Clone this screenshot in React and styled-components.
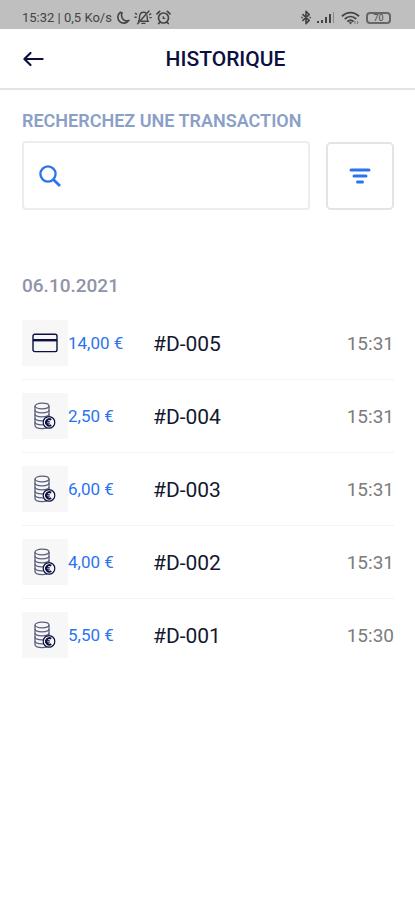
/* eslint-disable react/prop-types */
import { useState } from "react";
import styled, { createGlobalStyle, ThemeProvider } from "styled-components";

const theme = {
  colors: {
    white: "#ffffff",
    dark: "#0b1040",
    reference: "#14172f",
    primary: "#2b74ee",
    label: "#8b9fc8",
    date: "#9094a8",
    time: "#7c7c7c",
    border: "#e4e4e4",
    field: "#ededed",
    separator: "#f3f3f3",
    tile: "#f7f7f7",
    statusBar: "#bfbfbf",
    statusText: "#444444",
  },
  gutter: "22px",
};

const TRANSACTIONS = [
  { id: "#D-005", type: "card", amount: "14,00 €", time: "15:31" },
  { id: "#D-004", type: "cash", amount: "2,50 €", time: "15:31" },
  { id: "#D-003", type: "cash", amount: "6,00 €", time: "15:31" },
  { id: "#D-002", type: "cash", amount: "4,00 €", time: "15:31" },
  { id: "#D-001", type: "cash", amount: "5,50 €", time: "15:30" },
];

function MoonIcon() {
  return (
    <svg width="14" height="14" viewBox="0 0 14 14" fill="none" stroke="currentColor" strokeWidth="1.6" strokeLinejoin="round">
      <path d="M4.2 1.4A6 6 0 1 0 12.9 9.4C9.4 11 4 8 6 1.8Z" />
    </svg>
  );
}

function MutedBellIcon() {
  return (
    <svg width="18" height="15" viewBox="0 0 18 15" fill="none" stroke="currentColor" strokeWidth="1.4" strokeLinecap="round">
      <path d="M4.5 11.2C5.8 9.5 5.2 8 5.6 6 6 3.6 7.5 2.3 9.6 2.3c1.2 0 2 .3 2.7 1M13.1 5.6c.3 2-.2 3.8 1 5.6H7" />
      <path d="M15 1 3.6 13.8M8 13.4h3" />
      <path d="M2.6 4.2 1.4 3.4M2.3 7.2H1M15.6 4.6l1.2-.7M15.8 7.6h1.4" />
    </svg>
  );
}

function AlarmIcon() {
  return (
    <svg width="15" height="15" viewBox="0 0 15 15" fill="none" stroke="currentColor" strokeWidth="1.7" strokeLinecap="round">
      <circle cx="7.5" cy="8" r="5" />
      <path d="M7.2 6.6v1.8h1.6" strokeWidth="1.2" />
      <path d="M1 3.8 3.6 1.4M14 3.8l-2.6-2.4M4 12l-1.2 1.5M11 12l1.2 1.5" />
    </svg>
  );
}

function BluetoothIcon() {
  return (
    <svg width="10" height="15" viewBox="0 0 10 15" fill="none" stroke="currentColor" strokeWidth="1.6" strokeLinejoin="round">
      <path d="m1.4 4.2 6.8 6.2L5 13.6V1.4l3.2 3.2-6.8 6.2" />
      <path d="M.2 7.5h1.5M8.4 7.5h1.5" />
    </svg>
  );
}

function SignalIcon() {
  return (
    <svg width="18" height="13" viewBox="0 0 18 13" fill="currentColor">
      <rect x="0" y="10" width="2" height="2" />
      <rect x="4" y="9" width="2" height="3" />
      <rect x="8" y="6" width="2" height="6" />
      <rect x="12" y="3" width="2" height="9" />
      <rect x="16" y="1" width="1" height="11" opacity="0.45" />
    </svg>
  );
}

function WifiIcon() {
  return (
    <svg width="19" height="14" viewBox="0 0 19 14" fill="none" stroke="currentColor" strokeWidth="1.9">
      <path d="M1 5.2C6 .4 13 .4 18 5.2M3.8 8c3.4-3.2 8-3.2 11.4 0M6.4 10.6c1.8-1.7 4.4-1.7 6.2 0" />
      <path d="m7.6 11.3 1.9 2.3 1.9-2.3Z" fill="currentColor" stroke="none" />
      <path d="M14 10v3M16.6 10v3" strokeWidth="1" opacity="0.6" />
    </svg>
  );
}

function BackIcon() {
  return (
    <svg width="22" height="16" viewBox="0 0 22 16" fill="none" stroke="currentColor" strokeWidth="2.2" strokeLinecap="round" strokeLinejoin="round">
      <path d="M20.6 8H2.4M8.5 2 2.4 8l6.1 6" />
    </svg>
  );
}

function SearchIcon() {
  return (
    <svg width="22" height="22" viewBox="0 0 22 22" fill="none" stroke="currentColor" strokeWidth="2.3">
      <circle cx="9" cy="9" r="7.6" />
      <path d="m14.4 14.4 6.6 6.6" strokeWidth="2.8" />
    </svg>
  );
}

function FilterIcon() {
  return (
    <svg width="22" height="18" viewBox="0 0 22 18" fill="none" stroke="currentColor" strokeWidth="3" strokeLinecap="round">
      <path d="M2 3h18M5 9h12M8.5 15h5" />
    </svg>
  );
}

function CardIcon() {
  return (
    <svg width="26" height="20" viewBox="0 0 26 20" fill="none" stroke="currentColor" strokeWidth="1.4">
      <rect x="1" y="1.2" width="24" height="17.4" rx="1.8" />
      <path d="M1 7.2h24" strokeWidth="2.4" />
    </svg>
  );
}

function CoinsIcon() {
  return (
    <svg width="22" height="28" viewBox="0 0 22 28" fill="none" stroke="currentColor" strokeWidth="1.3">
      <g opacity="0.65">
        <ellipse cx="8" cy="4" rx="7" ry="2.8" />
        <path d="M1 4v19.6c0 1.8 3.2 3 7.2 3 1.8 0 3.4-.2 4.6-.7M15 4v10.6" />
        <path d="M1 8c0 1.6 3.2 2.8 7 2.8s7-1.2 7-2.8" />
        <path d="M1 12c0 1.6 3.2 2.8 7 2.8s7-1.2 7-2.8" />
        <path d="M1 16c0 1.6 3.2 2.8 7 2.8h1.4" />
        <path d="M1 20c0 1.6 3.2 2.8 7 2.8h1.6" />
      </g>
      <circle cx="15" cy="20.4" r="5.8" fill="#f7f7f7" strokeWidth="1.2" />
      <path d="M17.2 17.8a3.2 3.2 0 1 0 0 5.2" strokeWidth="2" />
      <path d="M11.2 19.7h4.6M11.2 21.2h4.6" strokeWidth="1" />
    </svg>
  );
}

function StatusBar() {
  return (
    <StatusBarStyled>
      <div className="group">
        <span>15:32 | 0,5 Ko/s</span>
        <MoonIcon />
        <MutedBellIcon />
        <AlarmIcon />
      </div>
      <div className="group group-right">
        <BluetoothIcon />
        <SignalIcon />
        <WifiIcon />
        <Battery>70</Battery>
      </div>
    </StatusBarStyled>
  );
}

function Transaction({ id, type, amount, time }) {
  return (
    <TransactionStyled>
      <div className="tile">{type === "card" ? <CardIcon /> : <CoinsIcon />}</div>
      <span className="amount">{amount}</span>
      <span className="reference">{id}</span>
      <time className="time">{time}</time>
    </TransactionStyled>
  );
}

export default function App() {
  const [search, setSearch] = useState("");
  const transactions = TRANSACTIONS.filter(({ id }) =>
    id.toLowerCase().includes(search.toLowerCase())
  );

  return (
    <ThemeProvider theme={theme}>
      <GlobalStyle />
      <StatusBar />
      <Header>
        <BackButton type="button" aria-label="Retour">
          <BackIcon />
        </BackButton>
        <h1>HISTORIQUE</h1>
      </Header>
      <Main>
        <SearchLabel htmlFor="search">RECHERCHEZ UNE TRANSACTION</SearchLabel>
        <SearchRow>
          <SearchField>
            <SearchIcon />
            <input
              id="search"
              type="text"
              value={search}
              onChange={(e) => setSearch(e.target.value)}
            />
          </SearchField>
          <FilterButton type="button" aria-label="Filtrer">
            <FilterIcon />
          </FilterButton>
        </SearchRow>
        <DateTitle>06.10.2021</DateTitle>
        <TransactionList>
          {transactions.map((transaction) => (
            <Transaction key={transaction.id} {...transaction} />
          ))}
        </TransactionList>
      </Main>
    </ThemeProvider>
  );
}

const GlobalStyle = createGlobalStyle`
  * {
    box-sizing: border-box;
  }

  body {
    margin: 0;
    background: ${theme.colors.white};
    color: ${theme.colors.dark};
    font-family: Roboto, "Liberation Sans", sans-serif;
  }

  svg {
    display: block;
    flex-shrink: 0;
  }
`;

const StatusBarStyled = styled.div`
  display: flex;
  justify-content: space-between;
  align-items: center;
  height: 29px;
  padding: 6px 24px 0 22px;
  background: ${({ theme }) => theme.colors.statusBar};
  color: ${({ theme }) => theme.colors.statusText};
  font-size: 13px;
  line-height: 16px;

  .group {
    display: flex;
    align-items: center;
    gap: 4px;
  }

  .group-right {
    gap: 6px;
  }
`;

const Battery = styled.span`
  width: 25px;
  height: 12px;
  border: 2px solid #666666;
  border-radius: 4px;
  font-size: 9px;
  line-height: 8px;
  text-align: center;
`;

const Header = styled.header`
  display: grid;
  grid-template-columns: 24px 1fr 24px;
  align-items: center;
  height: 61px;
  padding: 0 ${({ theme }) => theme.gutter};
  border-bottom: 2px solid ${({ theme }) => theme.colors.border};

  h1 {
    margin: 0;
    padding-left: 36px;
    font-size: 21px;
    font-weight: 500;
    line-height: 24px;
    text-align: center;
  }
`;

const BackButton = styled.button`
  padding: 0;
  border: none;
  background: none;
  color: ${({ theme }) => theme.colors.dark};
  cursor: pointer;
`;

const Main = styled.main`
  padding: 20px 21px 20px 22px;
`;

const SearchLabel = styled.label`
  display: block;
  color: ${({ theme }) => theme.colors.label};
  font-size: 18px;
  font-weight: 600;
  line-height: 22px;
`;

const SearchRow = styled.div`
  display: flex;
  align-items: center;
  gap: 16px;
  margin-top: 9px;
`;

const SearchField = styled.div`
  flex: 1;
  display: flex;
  align-items: center;
  gap: 12px;
  min-width: 0;
  height: 69px;
  padding: 0 15px;
  border: 2px solid ${({ theme }) => theme.colors.field};
  border-radius: 4px;
  color: ${({ theme }) => theme.colors.primary};

  input {
    flex: 1;
    min-width: 0;
    height: 40px;
    padding: 0;
    border: none;
    outline: none;
    background: none;
    color: ${({ theme }) => theme.colors.dark};
    font: inherit;
    font-size: 18px;
  }
`;

const FilterButton = styled.button`
  flex-shrink: 0;
  display: flex;
  align-items: center;
  justify-content: center;
  width: 68px;
  height: 68px;
  padding: 0;
  border: 2px solid ${({ theme }) => theme.colors.border};
  border-radius: 5px;
  background: none;
  color: ${({ theme }) => theme.colors.primary};
  cursor: pointer;
`;

const DateTitle = styled.h2`
  margin: 65px 0 10px;
  color: ${({ theme }) => theme.colors.date};
  font-size: 19px;
  font-weight: 500;
  line-height: 22px;
`;

const TransactionList = styled.ul`
  margin: 0;
  padding: 0;
  list-style: none;
`;

const TransactionStyled = styled.li`
  display: grid;
  grid-template-columns: 46px 85px 1fr auto;
  align-items: center;
  padding: 13px 0;
  border-bottom: 1px solid ${({ theme }) => theme.colors.separator};

  &:last-child {
    border-bottom: none;
  }

  .tile {
    display: flex;
    align-items: center;
    justify-content: center;
    height: 46px;
    background: ${({ theme }) => theme.colors.tile};
  }

  .amount {
    color: ${({ theme }) => theme.colors.primary};
    font-size: 17px;
  }

  .reference {
    padding-top: 1px;
    color: ${({ theme }) => theme.colors.reference};
    font-size: 21px;
  }

  .time {
    color: ${({ theme }) => theme.colors.time};
    font-size: 19px;
  }
`;
